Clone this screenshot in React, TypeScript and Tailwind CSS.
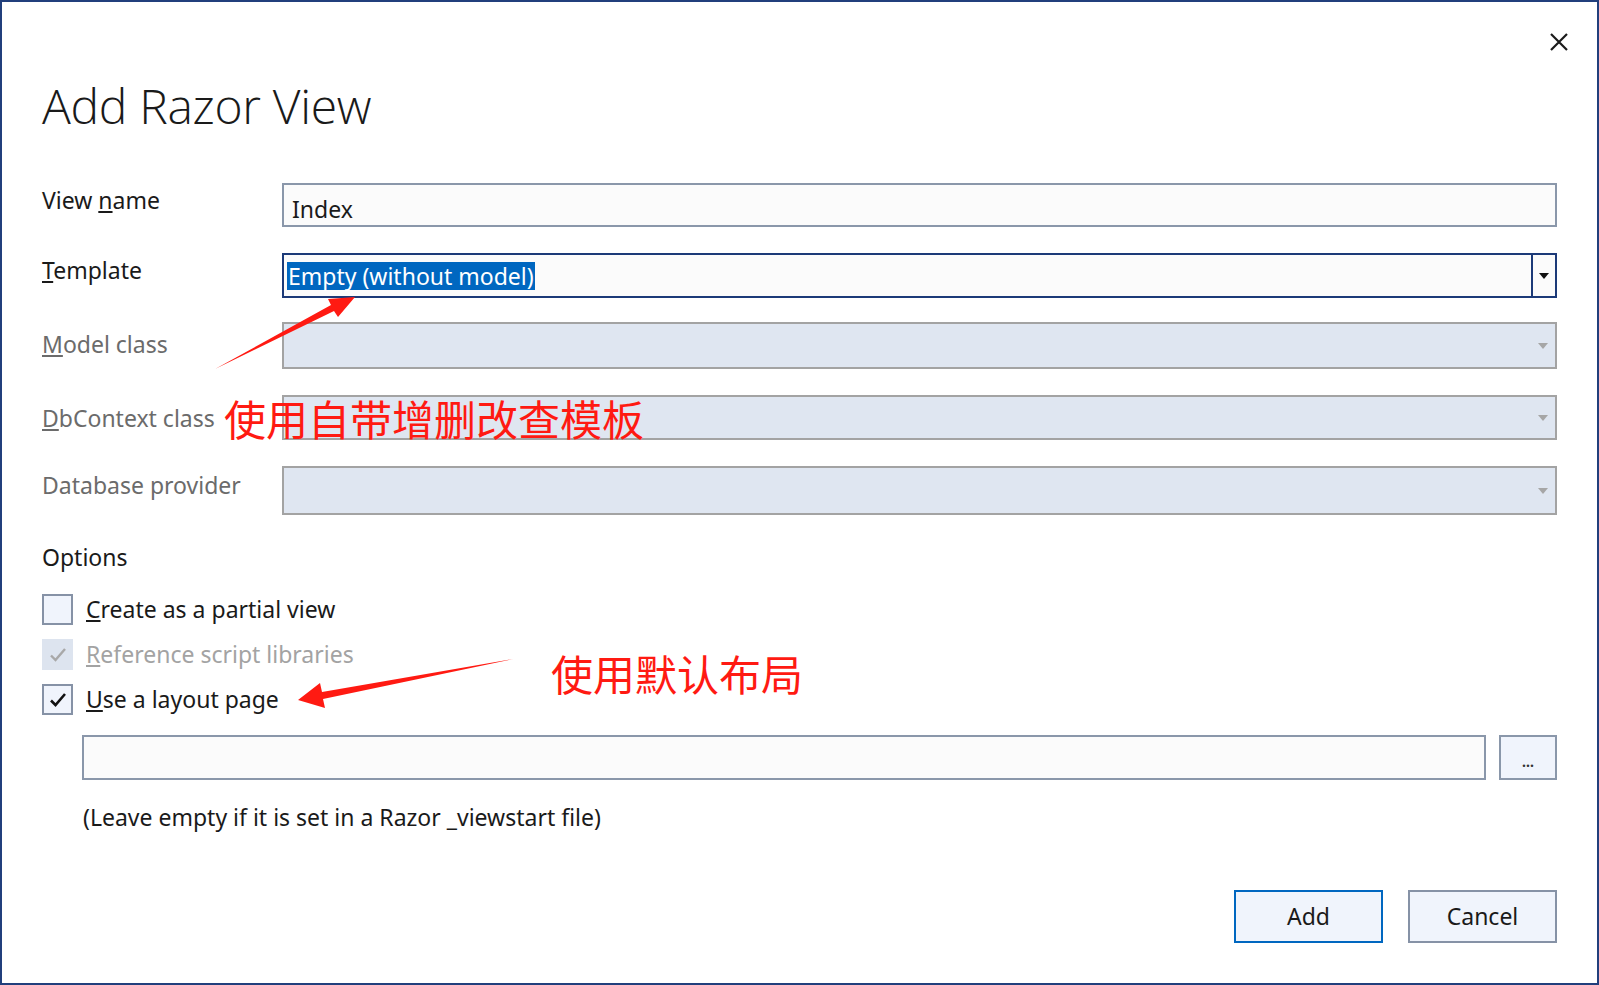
const ui = "font-['Noto_Sans','Open_Sans',sans-serif]";

function Caret({ muted }: { muted?: boolean }) {
  return (
    <svg width="10" height="6" viewBox="0 0 10 6" className={muted ? "text-[#a6a6a6]" : "text-[#111]"}>
      <path d="M0 0h10L5 6z" fill="currentColor" />
    </svg>
  );
}

function Field({ label, children, h, mt, pt, disabled }: { label: React.ReactNode; children: React.ReactNode; h: string; mt: string; pt: string; disabled?: boolean }) {
  return (
    <div className={`flex items-start ${mt}`}>
      <div className={`w-[240px] ${pt} text-[23px] leading-[28px] ${disabled ? "text-[#6b6b6b]" : "text-[#1a1a1a]"}`}>{label}</div>
      <div className={`flex-1 ${h}`}>{children}</div>
    </div>
  );
}

function DisabledCombo() {
  return (
    <div className="h-full flex items-center justify-end pr-[7px] border-2 border-[#a3a3a3] bg-[#dfe6f1]">
      <Caret muted />
    </div>
  );
}

function Check({ state }: { state: "off" | "on" | "disabled" }) {
  if (state === "disabled") {
    return (
      <div className="w-[31px] h-[31px] bg-[#dde4ef] flex items-center justify-center">
        <svg width="18" height="16" viewBox="0 0 18 16"><path d="M2 8.5l4.5 4.5L16 2" fill="none" stroke="#a8a8a8" strokeWidth="2.4" /></svg>
      </div>
    );
  }
  return (
    <div className="w-[31px] h-[31px] border-2 border-[#8692a6] bg-[#f0f4fc] flex items-center justify-center">
      {state === "on" && (
        <svg width="18" height="16" viewBox="0 0 18 16"><path d="M2 8.5l4.5 4.5L16 2" fill="none" stroke="#111" strokeWidth="2.6" /></svg>
      )}
    </div>
  );
}

export default function App() {
  return (
    <div className={`${ui} relative w-[1599px] h-[985px] bg-white border-2 border-[#213f7c] flex flex-col`}>
      <div className="flex justify-end pt-[31px] pr-[29px]">
        <svg width="18" height="18" viewBox="0 0 18 18">
          <path d="M1 1l16 16M17 1L1 17" stroke="#1a1a1a" strokeWidth="2.2" />
        </svg>
      </div>

      <h1 className="ml-[40px] mt-[27px] text-[48px] leading-[56px] font-light text-[#1a1a1a] font-['Open_Sans',sans-serif] tracking-[-0.3px]">Add Razor View</h1>

      <div className="pl-[40px] pr-[40px] mt-[49px] flex flex-col">
        <Field mt="" pt="pt-[3px]" h="h-[44px]" label={<>View <u>n</u>ame</>}>
          <div className="h-full border-2 border-[#8a97aa] bg-[#fbfbfb] flex items-center pl-[8px] pt-[8px] text-[23px] text-[#1a1a1a]">Index</div>
        </Field>
        <Field mt="mt-[26px]" pt="pt-[3px]" h="h-[45px]" label={<><u>T</u>emplate</>}>
          <div className="h-full border-2 border-[#1c3a78] bg-[#fbfbfb] flex">
            <div className="flex-1 flex items-start pt-[7px] pl-[3px]">
              <span className="bg-[#0067c0] text-white text-[23px] leading-[28px] px-[1px]">Empty (without model)</span>
            </div>
            <div className="w-[24px] border-l-2 border-[#1c3a78] flex items-center justify-center">
              <Caret />
            </div>
          </div>
        </Field>
        <Field mt="mt-[24px]" pt="pt-[8px]" h="h-[47px]" disabled label={<><u>M</u>odel class</>}>
          <DisabledCombo />
        </Field>
        <Field mt="mt-[26px]" pt="pt-[9px]" h="h-[45px]" disabled label={<><u>D</u>bContext class</>}>
          <DisabledCombo />
        </Field>
        <Field mt="mt-[26px]" pt="pt-[5px]" h="h-[49px]" disabled label="Database provider">
          <DisabledCombo />
        </Field>

        <div className="mt-[28px] text-[23px] leading-[28px] text-[#1a1a1a]">Options</div>

        <div className="mt-[23px] flex flex-col gap-[14px] text-[23px] leading-[31px]">
          <div className="flex items-center gap-[13px] text-[#1a1a1a]">
            <Check state="off" />
            <span><u>C</u>reate as a partial view</span>
          </div>
          <div className="flex items-center gap-[13px] text-[#a3a3a3]">
            <Check state="disabled" />
            <span><u>R</u>eference script libraries</span>
          </div>
          <div className="flex items-center gap-[13px] text-[#1a1a1a]">
            <Check state="on" />
            <span><u>U</u>se a layout page</span>
          </div>
        </div>

        <div className="mt-[20px] ml-[40px] flex gap-[13px] h-[45px]">
          <div className="flex-1 border-2 border-[#8a97aa] bg-[#fbfbfb]" />
          <div className="w-[58px] border-2 border-[#8a97aa] bg-[#f0f4fc] flex items-end justify-center pb-[9px] text-[14px] leading-[14px] font-bold text-[#333]">...</div>
        </div>

        <div className="ml-[41px] mt-[23px] text-[23px] leading-[28px] text-[#1a1a1a]">(Leave empty if it is set in a Razor _viewstart file)</div>

        <div className="mt-[59px] flex justify-end gap-[25px]">
          <button className="w-[149px] h-[53px] border-2 border-[#0067c0] bg-[#f0f4fc] text-[23px] text-[#1a1a1a]">Add</button>
          <button className="w-[149px] h-[53px] border-2 border-[#8692a6] bg-[#f0f4fc] text-[23px] text-[#1a1a1a]">Cancel</button>
        </div>
      </div>

      {/* red annotations drawn over the dialog */}
      <svg className="absolute left-[-2px] top-[-2px] pointer-events-none" width="1599" height="985" viewBox="0 0 1599 985">
        <polygon points="215,369 331,305 328,299 355,297 338,317 334,311" fill="#ff1a12" />
        <polygon points="513,659 322,692 320,683 298,700 325,708 323,699" fill="#ff1a12" />
      </svg>
      <div className="absolute left-[222px] top-[390px] text-[42px] leading-[52px] text-[#ff1a12] font-['Noto_Sans_CJK_SC',sans-serif]">使用自带增删改查模板</div>
      <div className="absolute left-[549px] top-[645px] text-[42px] leading-[52px] text-[#ff1a12] font-['Noto_Sans_CJK_SC',sans-serif]">使用默认布局</div>
    </div>
  );
}
